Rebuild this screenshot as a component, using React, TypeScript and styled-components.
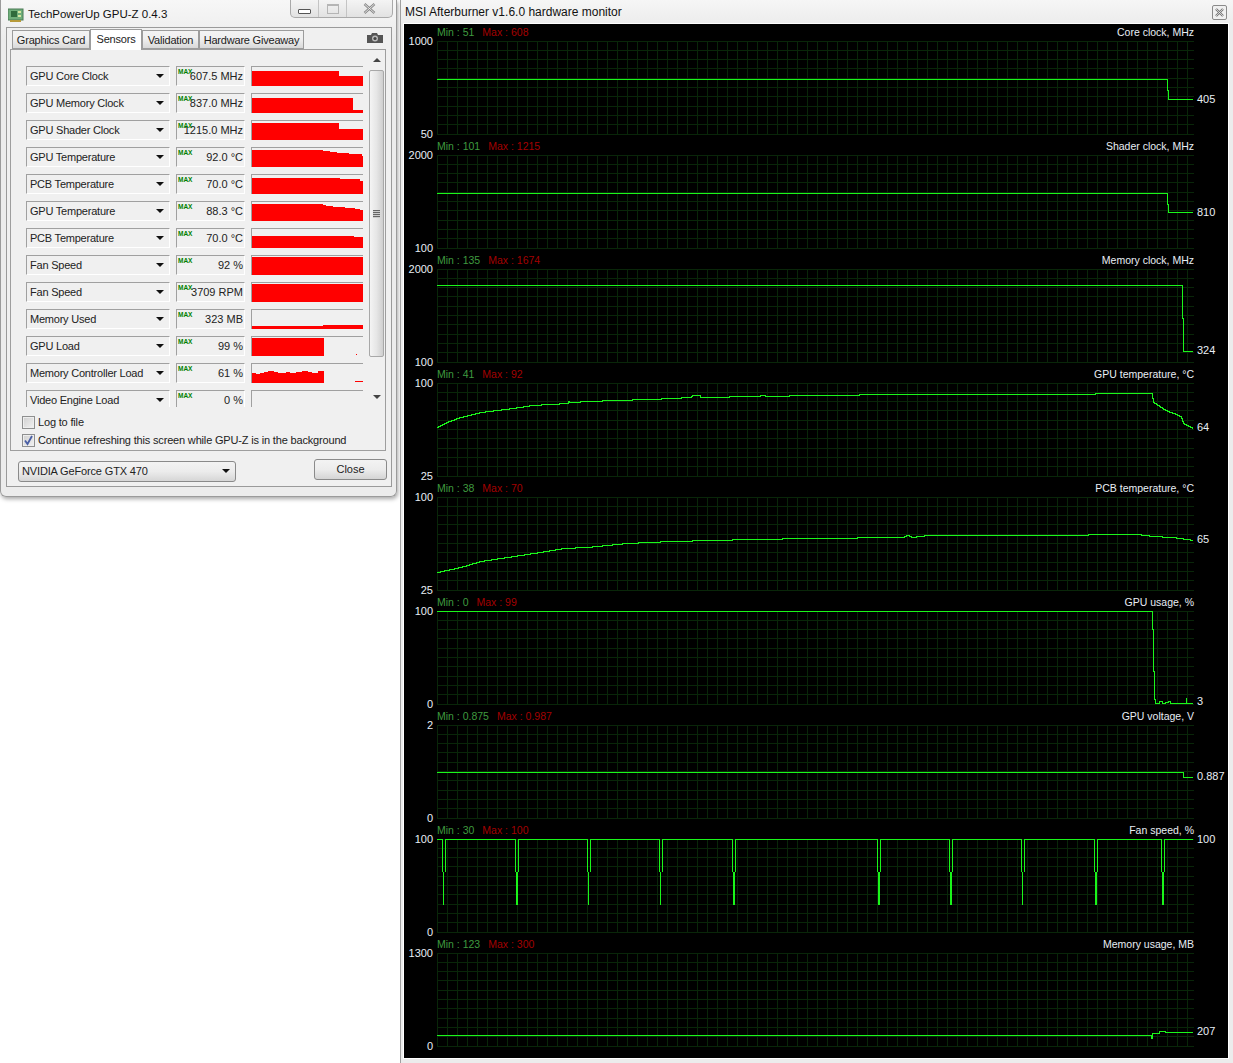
import React from "react";
import styled, { createGlobalStyle } from "styled-components";

const GlobalStyle = createGlobalStyle`
  html, body {
    margin: 0;
    padding: 0;
    background: #fff;
  }
  body {
    font-family: "Liberation Sans", Arial, sans-serif;
    font-size: 11px;
  }
`;

const Page = styled.div`
  width: 1233px;
  height: 1063px;
  display: flex;
  gap: 3px;
  align-items: flex-start;
  overflow: hidden;
  background: #fff;
`;

/* ---------- GPU-Z window ---------- */

const GpuzWindow = styled.div`
  width: 397px;
  height: 497px;
  flex: none;
  box-sizing: border-box;
  background: linear-gradient(#f7f7f7, #ececec 40px, #ececec);
  border-radius: 0 0 6px 6px;
  border: 1px solid #9b9b9b;
  border-top: none;
  box-shadow: 1px 2px 4px rgba(0, 0, 0, 0.35);
  display: flex;
  flex-direction: column;
  padding: 0 4px 9px 5px;
`;

const GpuzTitle = styled.div`
  height: 27px;
  flex: none;
  display: flex;
  align-items: flex-start;
  font-size: 11.5px;
  color: #111;
`;

const TitleText = styled.span`
  margin: 7px 0 0 4px;
  line-height: 14px;
  white-space: nowrap;
`;

const CardIcon = styled.svg`
  margin: 8px 0 0 2px;
  flex: none;
`;

const CaptionButtons = styled.div`
  margin-left: auto;
  margin-right: -1px;
  width: 103px;
  height: 18px;
  display: flex;
  box-sizing: border-box;
  border: 1px solid #a9a9a9;
  border-top: none;
  border-radius: 0 0 5px 5px;
  background: linear-gradient(#f4f4f4, #e2e2e2);
`;

const CaptionButton = styled.div<{ $w: number }>`
  width: ${(p) => p.$w}px;
  display: flex;
  align-items: center;
  justify-content: center;
  border-left: 1px solid #c4c4c4;
  &:first-child {
    border-left: none;
  }
`;

const MinGlyph = styled.div`
  width: 11px;
  height: 3px;
  margin-top: 5px;
  border: 1px solid #555;
  border-radius: 1px;
  background: #fff;
`;

const MaxGlyph = styled.div`
  width: 10px;
  height: 7px;
  border: 1px solid #b5b5b5;
  border-top-width: 2px;
`;

const ClientArea = styled.div`
  flex: 1;
  min-height: 0;
  display: flex;
  flex-direction: column;
  border: 1px solid #9a9a9a;
  background: #f0f0f0;
  padding: 1px 5px 0 3px;
`;

const TabBar = styled.div`
  display: flex;
  align-items: flex-end;
  height: 20px;
  padding-left: 2px;
  flex: none;
  position: relative;
  z-index: 1;
`;

const Tab = styled.div<{ $w: number; $active?: boolean }>`
  width: ${(p) => p.$w}px;
  box-sizing: border-box;
  height: ${(p) => (p.$active ? 21 : 19)}px;
  margin-bottom: ${(p) => (p.$active ? -1 : 0)}px;
  border: 1px solid #9c9c9c;
  border-bottom: ${(p) => (p.$active ? "none" : "1px solid #9c9c9c")};
  background: ${(p) => (p.$active ? "#fff" : "linear-gradient(#f3f3f3, #f0f0f0 45%, #d9d9d9)")};
  text-align: center;
  white-space: nowrap;
  font-size: 11px;
  letter-spacing: -0.2px;
  line-height: 18px;
  color: #222;
`;

const CameraIcon = styled.svg`
  margin-left: auto;
  margin-right: 3px;
  margin-bottom: 6px;
`;

const Panel = styled.div`
  height: 402px;
  flex: none;
  box-sizing: border-box;
  border: 1px solid #9e9e9e;
  display: flex;
  flex-direction: column;
  background: #f0f0f0;
`;

const SensorArea = styled.div`
  height: 357px;
  flex: none;
  display: flex;
  overflow: hidden;
`;

const SensorList = styled.div`
  flex: 1;
  display: flex;
  flex-direction: column;
  gap: 8px;
  padding: 16px 0 0 15px;
`;

const SensorRow = styled.div`
  display: flex;
  gap: 6px;
  height: 19px;
  flex: none;
`;

const Sunken = styled.div`
  box-sizing: border-box;
  height: 20px;
  background: #f0f0f0;
  border-top: 1px solid #a0a0a0;
  border-left: 1px solid #a0a0a0;
  border-right: 1px solid #fff;
  border-bottom: 1px solid #fff;
`;

const SensorCombo = styled(Sunken)`
  width: 144px;
  display: flex;
  align-items: center;
  padding: 0 5px 0 3px;
  font-size: 11px;
  letter-spacing: -0.22px;
  white-space: nowrap;
  color: #222;
`;

const ComboArrow = styled.span`
  margin-left: auto;
  width: 0;
  height: 0;
  border-left: 4px solid transparent;
  border-right: 4px solid transparent;
  border-top: 4px solid #111;
`;

const SensorValue = styled(Sunken)`
  width: 69px;
  position: relative;
  text-align: right;
  padding-right: 1px;
  line-height: 18px;
  font-size: 11px;
  white-space: nowrap;
  color: #222;
`;

const MaxBadge = styled.span`
  position: absolute;
  left: 1px;
  top: 1px;
  font-size: 6.5px;
  line-height: 8px;
  font-weight: bold;
  color: #008000;
`;

const SensorGraph = styled(Sunken)`
  width: 112px;
  display: flex;
  border-right: none;
  border-bottom: none;
`;

const ScrollBar = styled.div`
  width: 15px;
  flex: none;
  margin-right: 1px;
  display: flex;
  flex-direction: column;
  align-items: stretch;
  background: #f0f0f0;
`;

const ScrollArrow = styled.div<{ $up?: boolean }>`
  height: 20px;
  flex: none;
  display: flex;
  align-items: center;
  justify-content: center;
  ${(p) => (p.$up ? "" : "margin-top: auto;")}
  &::after {
    content: "";
    width: 0;
    height: 0;
    border-left: 4px solid transparent;
    border-right: 4px solid transparent;
    ${(p) => (p.$up ? "border-bottom: 4px solid #444;" : "border-top: 4px solid #444;")}
  }
`;

const ScrollThumb = styled.div`
  height: 287px;
  flex: none;
  box-sizing: border-box;
  border: 1px solid #a8a8a8;
  border-radius: 2px;
  background: linear-gradient(90deg, #f4f4f4, #e6e6e6 50%, #cfcfcf);
  display: flex;
  flex-direction: column;
  align-items: center;
  justify-content: center;
  gap: 1px;
`;

const GripLine = styled.div`
  width: 7px;
  height: 1px;
  background: #666;
  box-shadow: 0 1px 0 #ccc;
`;

const Options = styled.div`
  display: flex;
  flex-direction: column;
  gap: 5px;
  padding: 9px 0 0 11px;
`;

const OptionRow = styled.div`
  display: flex;
  align-items: center;
  gap: 3px;
  height: 13px;
  font-size: 11px;
  letter-spacing: -0.17px;
  white-space: nowrap;
  color: #222;
`;

const OptionLabel = styled.span`
  margin-bottom: 2px;
`;

const CheckBox = styled.div`
  width: 13px;
  height: 13px;
  flex: none;
  box-sizing: border-box;
  border: 1px solid #8e8f8f;
  background: linear-gradient(135deg, #cfcfcf, #f2f2f2);
  box-shadow: inset 0 0 0 1px #eee;
  display: flex;
  align-items: center;
  justify-content: center;
`;

const BottomBar = styled.div`
  flex: 1;
  display: flex;
  align-items: flex-start;
  justify-content: space-between;
  padding: 8px 0 0 8px;
  margin-right: -1px;
`;

const CardSelect = styled.div`
  width: 218px;
  height: 21px;
  margin-top: 2px;
  box-sizing: border-box;
  border: 1px solid #8a8a8a;
  border-radius: 3px;
  background: linear-gradient(#f3f3f3, #ececec 50%, #d6d6d6);
  display: flex;
  align-items: center;
  padding: 0 5px 1px 3px;
  font-size: 11px;
  letter-spacing: -0.15px;
  white-space: nowrap;
  color: #222;
`;

const CloseButton = styled.div`
  width: 73px;
  height: 21px;
  box-sizing: border-box;
  border: 1px solid #8a8a8a;
  border-radius: 3px;
  background: linear-gradient(#f3f3f3, #ececec 50%, #d4d4d4);
  text-align: center;
  line-height: 19px;
  font-size: 11px;
  color: #222;
`;

/* ---------- Afterburner window ---------- */

const MonitorWindow = styled.div`
  flex: 1;
  height: 1063px;
  box-sizing: border-box;
  background: linear-gradient(#f6f6f6, #ececec 24px);
  border-left: 1px solid #a0a0a0;
  display: flex;
  flex-direction: column;
  padding: 0 5px 5px 3px;
`;

const MonitorTitle = styled.div`
  height: 24px;
  flex: none;
  display: flex;
  align-items: center;
  justify-content: space-between;
  padding-left: 1px;
  font-size: 12px;
  color: #111;
`;

const SmallClose = styled.div`
  width: 15px;
  height: 15px;
  box-sizing: border-box;
  border: 1px solid #8a8a8a;
  border-radius: 2px;
  background: #f0f0f0;
  display: flex;
  align-items: center;
  justify-content: center;
  margin-right: 1px;
  margin-top: 1px;
`;

const MonitorBody = styled.div`
  flex: 1;
  min-height: 0;
  background: #000;
  outline: 1px solid #fff;
  padding-top: 1px;
  display: flex;
  flex-direction: column;
`;

const ChartBlock = styled.div`
  height: 114px;
  flex: none;
  display: flex;
  flex-direction: column;
`;

const ChartHeader = styled.div`
  height: 14px;
  padding-bottom: 2px;
  width: 757px;
  margin-left: 33px;
  flex: none;
  display: flex;
  align-items: center;
  justify-content: space-between;
  font-size: 10.5px;
  line-height: 14px;
`;

const MinMax = styled.div`
  display: flex;
  gap: 8px;
`;

const MinText = styled.span`
  color: #3f9a3f;
`;

const MaxText = styled.span`
  color: #a30000;
`;

const ChartTitle = styled.span`
  color: #e8eef5;
`;

const PlotRow = styled.div`
  height: 94px;
  display: flex;
  position: relative;
  flex: none;
`;

const AxisColumn = styled.div`
  width: 29px;
  margin-right: 4px;
  flex: none;
  height: 106px;
  margin-top: -6px;
  display: flex;
  flex-direction: column;
  justify-content: space-between;
  text-align: right;
  font-size: 11px;
  line-height: 13px;
  color: #e8eef5;
`;

const PlotSvg = styled.svg`
  display: block;
  flex: none;
`;

const CurrentValue = styled.span<{ $y: number }>`
  position: absolute;
  left: 793px;
  top: ${(p) => p.$y - 7}px;
  line-height: 14px;
  font-size: 11px;
  color: #e8eef5;
`;

/* ---------- data ---------- */

const W = 757;
const H = 94;
const LINE = "#1af51a";
const GRID = "#092609";
const gridX = Array.from({ length: 76 }, (_, i) => i * 10 + 0.5);
const gridY = Array.from({ length: 11 }, (_, i) => Math.floor(i * 9.3) + 0.5);

// turns sparse samples into the one pixel staircase the monitor draws
const stairs = (pts: [number, number][]) => {
  let d = "";
  let prev = -1;
  for (let i = 0; i < pts.length - 1; i++) {
    const [x0, y0] = pts[i];
    const [x1, y1] = pts[i + 1];
    for (let x = x0; x < x1; x++) {
      const y = Math.round(y0 + ((y1 - y0) * (x - x0)) / (x1 - x0)) + 0.5;
      if (d === "") d = `M${x} ${y}`;
      else if (y !== prev) d += ` H${x} V${y}`;
      prev = y;
    }
  }
  return `${d} H${pts[pts.length - 1][0]}`;
};

const fanSpikes: { x: number; bold?: boolean }[] = [
  { x: 6 },
  { x: 79, bold: true },
  { x: 151 },
  { x: 223 },
  { x: 296, bold: true },
  { x: 441, bold: true },
  { x: 513, bold: true },
  { x: 585 },
  { x: 658, bold: true },
  { x: 725, bold: true },
];

const fanPath = () => {
  let d = "M0 0.5";
  fanSpikes.forEach(({ x }) => {
    d += ` H${x - 0.5} V33 M${x + 2.5} 33 V0.5`;
  });
  return d + " H756";
};

type ChartData = {
  min: string;
  max: string;
  title: string;
  top: string;
  bottom: string;
  value: string;
  valueY: number;
  line: string;
  extra?: React.ReactNode;
};

const charts: ChartData[] = [
  {
    min: "Min : 51",
    max: "Max : 608",
    title: "Core clock, MHz",
    top: "1000",
    bottom: "50",
    value: "405",
    valueY: 58,
    line: "M0 38.5 H730.5 V49.5 H731.5 V58.5 H756",
  },
  {
    min: "Min : 101",
    max: "Max : 1215",
    title: "Shader clock, MHz",
    top: "2000",
    bottom: "100",
    value: "810",
    valueY: 57,
    line: "M0 38.5 H730.5 V49.5 H731.5 V57.5 H756",
  },
  {
    min: "Min : 135",
    max: "Max : 1674",
    title: "Memory clock, MHz",
    top: "2000",
    bottom: "100",
    value: "324",
    valueY: 81,
    line: "M0 16.5 H745.5 V49.5 H746.5 V82.5 H756",
  },
  {
    min: "Min : 41",
    max: "Max : 92",
    title: "GPU temperature, °C",
    top: "100",
    bottom: "25",
    value: "64",
    valueY: 44,
    line: stairs([
      [0, 44], [9, 39], [23, 34], [43, 29], [75, 25], [95, 22], [130, 20], [131, 18], [132, 19],
      [175, 17], [213, 16], [253, 14], [255, 12], [262, 12], [263, 14], [320, 13], [325, 12],
      [330, 13], [373, 12], [470, 11], [600, 11], [714, 10], [716, 19], [722, 23], [728, 27],
      [736, 30], [743, 33], [746, 40], [756, 45],
    ]),
  },
  {
    min: "Min : 38",
    max: "Max : 70",
    title: "PCB temperature, °C",
    top: "100",
    bottom: "25",
    value: "65",
    valueY: 42,
    line: stairs([
      [0, 75], [23, 70], [43, 64], [70, 60], [96, 56], [126, 51], [149, 50], [189, 46], [234, 44],
      [315, 42], [373, 41], [465, 40], [470, 38], [475, 40], [490, 38], [600, 38], [700, 37],
      [715, 39], [735, 40], [756, 43],
    ]),
  },
  {
    min: "Min : 0",
    max: "Max : 99",
    title: "GPU usage, %",
    top: "100",
    bottom: "0",
    value: "3",
    valueY: 90,
    line: "M0 0.5 H715.5 V18.5 H716.5 V60.5 H717.5 V88.5 H718.5 V92.5 H722 V90.5 H725 V92.5 H728 V91.5 H731 V90.5 H733 V92.5 H749.5 V86.5 V92.5 H756",
  },
  {
    min: "Min : 0.875",
    max: "Max : 0.987",
    title: "GPU voltage, V",
    top: "2",
    bottom: "0",
    value: "0.887",
    valueY: 51,
    line: "M0 47.5 H746.5 V52.5 H756",
  },
  {
    min: "Min : 30",
    max: "Max : 100",
    title: "Fan speed, %",
    top: "100",
    bottom: "0",
    value: "100",
    valueY: 0,
    line: "",
    extra: (
      <>
        <path d={fanPath()} fill="none" stroke={LINE} />
        {fanSpikes.map(({ x, bold }) => (
          <rect key={x} x={x} y={33} width={bold ? 2 : 1} height={33} fill={LINE} />
        ))}
      </>
    ),
  },
  {
    min: "Min : 123",
    max: "Max : 300",
    title: "Memory usage, MB",
    top: "1300",
    bottom: "0",
    value: "207",
    valueY: 78,
    line: "M0 82.5 H714.5 V85.5 H715.5 V80.5 H722.5 V78.5 H728.5 V79.5 H756",
  },
];

type Sensor = {
  name: string;
  value: string;
  steps: [number, number][];
  dots?: [number, number, number][];
};

const sensors: Sensor[] = [
  { name: "GPU Core Clock", value: "607.5 MHz", steps: [[0, 4], [87, 9]] },
  { name: "GPU Memory Clock", value: "837.0 MHz", steps: [[0, 4], [101, 16]] },
  { name: "GPU Shader Clock", value: "1215.0 MHz", steps: [[0, 2], [87, 8]] },
  {
    name: "GPU Temperature",
    value: "92.0 °C",
    steps: [[0, 2], [71, 3], [78, 4], [85, 5], [97, 6], [110, 8]],
  },
  { name: "PCB Temperature", value: "70.0 °C", steps: [[0, 3], [88, 4], [108, 6]] },
  {
    name: "GPU Temperature",
    value: "88.3 °C",
    steps: [[0, 2], [71, 3], [74, 4], [81, 5], [93, 6], [103, 7], [108, 8]],
  },
  { name: "PCB Temperature", value: "70.0 °C", steps: [[0, 7], [102, 8]] },
  { name: "Fan Speed", value: "92 %", steps: [[0, 1]] },
  { name: "Fan Speed", value: "3709 RPM", steps: [[0, 1]] },
  { name: "Memory Used", value: "323 MB", steps: [[0, 16], [71, 15]] },
  {
    name: "GPU Load",
    value: "99 %",
    steps: [[0, 1], [72, 19]],
    dots: [[104, 17, 1]],
  },
  {
    name: "Memory Controller Load",
    value: "61 %",
    steps: [
      [0, 9], [4, 10], [8, 9], [12, 8], [16, 7], [22, 8], [26, 9], [34, 8], [38, 9],
      [44, 8], [50, 7], [56, 8], [60, 9], [66, 7], [72, 19],
    ],
    dots: [[103, 17, 8]],
  },
  { name: "Video Engine Load", value: "0 %", steps: [[0, 19]] },
];

const sparkPoints = (steps: [number, number][]) => {
  const pts = ["0,19"];
  steps.forEach(([x, y], i) => {
    const next = i + 1 < steps.length ? steps[i + 1][0] : 111;
    pts.push(`${x},${y}`, `${next},${y}`);
  });
  pts.push("111,19");
  return pts.join(" ");
};

const tabs = [
  { label: "Graphics Card", w: 78 },
  { label: "Sensors", w: 52, active: true },
  { label: "Validation", w: 57 },
  { label: "Hardware Giveaway", w: 105 },
];

const Chart: React.FC<{ data: ChartData }> = ({ data }) => (
  <ChartBlock>
    <ChartHeader>
      <MinMax>
        <MinText>{data.min}</MinText>
        <MaxText>{data.max}</MaxText>
      </MinMax>
      <ChartTitle>{data.title}</ChartTitle>
    </ChartHeader>
    <PlotRow>
      <AxisColumn>
        <span>{data.top}</span>
        <span>{data.bottom}</span>
      </AxisColumn>
      <PlotSvg width={W} height={H} shapeRendering="crispEdges">
        {gridX.map((x) => (
          <line key={x} x1={x} x2={x} y1={0} y2={93} stroke={GRID} />
        ))}
        {gridY.map((y) => (
          <line key={y} x1={0} x2={W} y1={y} y2={y} stroke={GRID} />
        ))}
        {data.line && <path d={data.line} fill="none" stroke={LINE} />}
        {data.extra}
      </PlotSvg>
      <CurrentValue $y={data.valueY}>{data.value}</CurrentValue>
    </PlotRow>
  </ChartBlock>
);

export default function App() {
  return (
    <Page>
      <GlobalStyle />
      <GpuzWindow>
        <GpuzTitle>
          <CardIcon width="16" height="14" viewBox="0 0 16 14">
            <rect x="0" y="1" width="15" height="11" fill="#6fae7a" stroke="#4a7a55" />
            <rect x="3" y="3" width="6" height="6" fill="#2f6b3c" />
            <rect x="10" y="3" width="3" height="2" fill="#d6e6a0" />
            <rect x="10" y="7" width="3" height="2" fill="#d6e6a0" />
            <rect x="2" y="12" width="11" height="2" fill="#b79a3a" />
          </CardIcon>
          <TitleText>TechPowerUp GPU-Z 0.4.3</TitleText>
          <CaptionButtons>
            <CaptionButton $w={28}>
              <MinGlyph />
            </CaptionButton>
            <CaptionButton $w={27}>
              <MaxGlyph />
            </CaptionButton>
            <CaptionButton $w={46}>
              <svg width="13" height="11" viewBox="0 0 13 11">
                <path d="M1.5 1 L11.5 10 M11.5 1 L1.5 10" stroke="#888" strokeWidth="2.4" fill="none" />
                <path d="M1.5 1 L11.5 10 M11.5 1 L1.5 10" stroke="#f5f5f5" strokeWidth="0.8" fill="none" />
              </svg>
            </CaptionButton>
          </CaptionButtons>
        </GpuzTitle>
        <ClientArea>
          <TabBar>
            {tabs.map((t) => (
              <Tab key={t.label} $w={t.w} $active={t.active}>
                {t.label}
              </Tab>
            ))}
            <CameraIcon width="16" height="10" viewBox="0 0 16 10">
              <path d="M0 2 H4 L5 0 H10 L11 2 H16 V10 H0 Z" fill="#555" />
              <circle cx="8" cy="5.5" r="3" fill="#bbb" />
              <circle cx="8" cy="5.5" r="1.6" fill="#444" />
            </CameraIcon>
          </TabBar>
          <Panel>
            <SensorArea>
              <SensorList>
                {sensors.map((s, i) => (
                  <SensorRow key={i}>
                    <SensorCombo>
                      {s.name}
                      <ComboArrow />
                    </SensorCombo>
                    <SensorValue>
                      <MaxBadge>MAX</MaxBadge>
                      {s.value}
                    </SensorValue>
                    <SensorGraph>
                      <svg width="111" height="19" shapeRendering="crispEdges">
                        <polygon points={sparkPoints(s.steps)} fill="#ff0000" />
                        {s.dots?.map(([x, y, w]) => (
                          <rect key={x} x={x} y={y} width={w} height={1} fill="#ff0000" />
                        ))}
                      </svg>
                    </SensorGraph>
                  </SensorRow>
                ))}
              </SensorList>
              <ScrollBar>
                <ScrollArrow $up />
                <ScrollThumb>
                  <GripLine />
                  <GripLine />
                  <GripLine />
                  <GripLine />
                </ScrollThumb>
                <ScrollArrow />
              </ScrollBar>
            </SensorArea>
            <Options>
              <OptionRow>
                <CheckBox />
                <OptionLabel>Log to file</OptionLabel>
              </OptionRow>
              <OptionRow>
                <CheckBox>
                  <svg width="11" height="11" viewBox="0 0 11 11">
                    <path d="M2 5.5 L4.5 9 L9 1" fill="none" stroke="#4a5fa5" strokeWidth="1.8" />
                  </svg>
                </CheckBox>
                <OptionLabel>Continue refreshing this screen while GPU-Z is in the background</OptionLabel>
              </OptionRow>
            </Options>
          </Panel>
          <BottomBar>
            <CardSelect>
              NVIDIA GeForce GTX 470
              <ComboArrow />
            </CardSelect>
            <CloseButton>Close</CloseButton>
          </BottomBar>
        </ClientArea>
      </GpuzWindow>
      <MonitorWindow>
        <MonitorTitle>
          MSI Afterburner v1.6.0 hardware monitor
          <SmallClose>
            <svg width="9" height="9" viewBox="0 0 9 9">
              <path d="M1 1 L8 8 M8 1 L1 8" stroke="#777" strokeWidth="2.4" fill="none" />
              <path d="M1 1 L8 8 M8 1 L1 8" stroke="#f5f5f5" strokeWidth="0.7" fill="none" />
            </svg>
          </SmallClose>
        </MonitorTitle>
        <MonitorBody>
          {charts.map((c) => (
            <Chart key={c.title} data={c} />
          ))}
        </MonitorBody>
      </MonitorWindow>
    </Page>
  );
}
